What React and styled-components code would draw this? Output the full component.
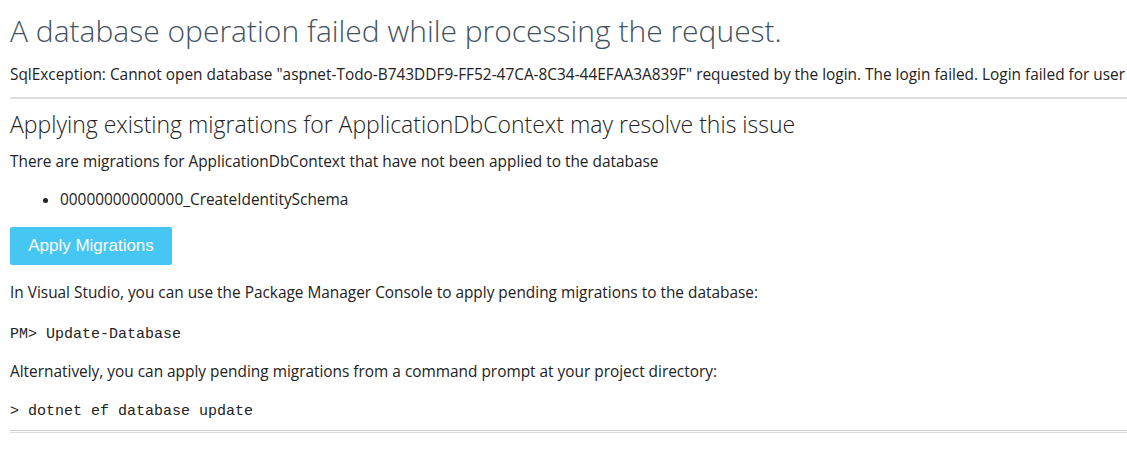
import React from 'react'
import styled, { createGlobalStyle } from 'styled-components'

const GlobalStyle = createGlobalStyle`
  html, body {
    margin: 0;
    padding: 0;
    background: #fff;
    overflow: hidden;
  }
  body {
    font-family: "Open Sans", "Noto Sans", Arial, sans-serif;
    font-size: 15.4px;
    color: #222;
  }
`

const Page = styled.div`
  width: 1400px;
  padding: 0 10px;
`

const Title = styled.h1`
  margin: 12px 0 0;
  font-size: 30px;
  line-height: 38px;
  font-weight: 300;
  color: #44525e;
`

const Text = styled.p`
  margin: ${(p) => p.$gap || '17px'} 0 0;
  line-height: 21px;
  white-space: nowrap;
`

const Rule = styled.hr`
  margin: ${(p) => p.$gap || '12px'} 0 0;
  border: 0;
  border-top: ${(p) => (p.$double ? '1px solid #ccc' : '2px solid #ddd')};
  border-bottom: ${(p) => (p.$double ? '1px solid #ddd' : '0')};
  height: ${(p) => (p.$double ? '1px' : '0')};
`

const Subtitle = styled.h2`
  margin: 10px 0 0;
  font-size: 23px;
  line-height: 30px;
  font-weight: 300;
  color: #222;
`

const List = styled.ul`
  margin: 17px 0 0;
  padding-left: 50px;
  line-height: 21px;
`

const Button = styled.button`
  display: block;
  margin: 17px 0 0;
  width: 162px;
  height: 38px;
  border: 0;
  border-radius: 2px;
  background: #46c6f2;
  color: #fff;
  font-family: "Liberation Sans", Arial, sans-serif;
  font-size: 17px;
  padding: 0;
`

const Code = styled.code`
  display: block;
  margin: ${(p) => p.$gap || '21px'} 0 0;
  line-height: 21px;
  font-family: "Liberation Mono", "DejaVu Sans Mono", monospace;
  font-size: 15px;
  white-space: pre;
`

export default function App() {
  return (
    <>
      <GlobalStyle />
      <Page>
        <Title>A database operation failed while processing the request.</Title>
        <Text $gap="14px">
          SqlException: Cannot open database "aspnet-Todo-B743DDF9-FF52-47CA-8C34-44EFAA3A839F" requested by the login. The login failed. Login failed for user 'DESKTOP\user'.
        </Text>
        <Rule />
        <div>
          <Subtitle>Applying existing migrations for ApplicationDbContext may resolve this issue</Subtitle>
          <Text $gap="12px">There are migrations for ApplicationDbContext that have not been applied to the database</Text>
          <List>
            <li>00000000000000_CreateIdentitySchema</li>
          </List>
          <Button>Apply Migrations</Button>
          <Text>In Visual Studio, you can use the Package Manager Console to apply pending migrations to the database:</Text>
          <Code>PM&gt; Update-Database</Code>
          <Text $gap="16px">Alternatively, you can apply pending migrations from a command prompt at your project directory:</Text>
          <Code $gap="19px">&gt; dotnet ef database update</Code>
          <Rule $double $gap="8px" />
        </div>
      </Page>
    </>
  )
}
